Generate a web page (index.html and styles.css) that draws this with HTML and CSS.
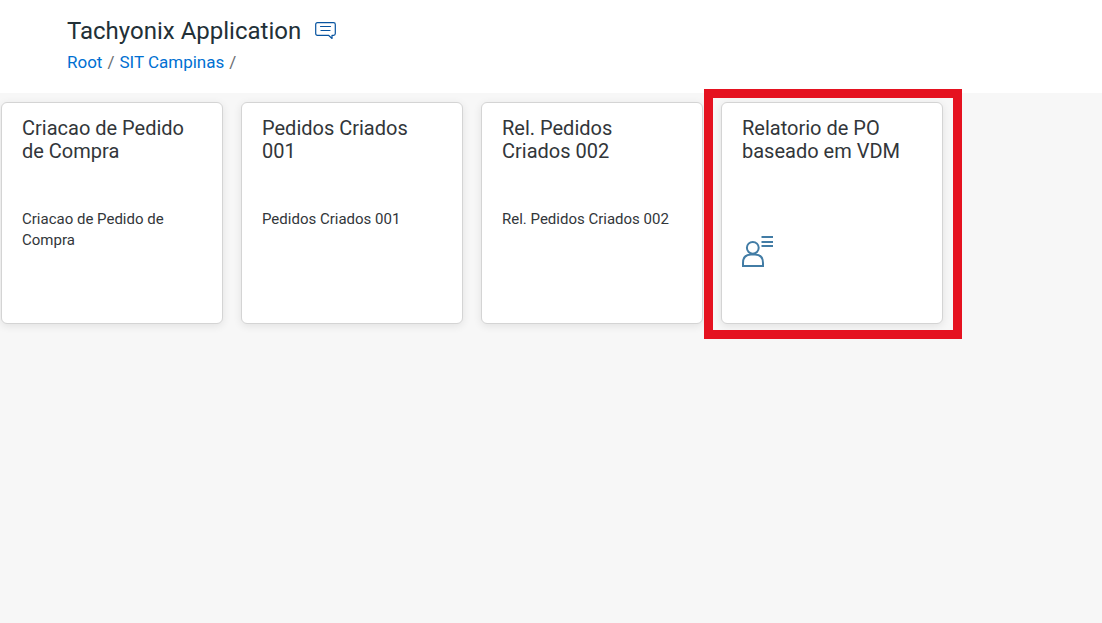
FILE: index.html
```html
<!DOCTYPE html>
<html lang="pt">
<head>
<meta charset="utf-8">
<title>Tachyonix Application</title>
<link rel="stylesheet" href="styles.css">
</head>
<body>
<header class="header">
  <div class="title-row">
    <h1 class="title">Tachyonix Application</h1>
    <button class="comment-button" type="button" aria-label="Comments">
      <svg width="21" height="18" viewBox="0 0 21 18" fill="none" stroke="currentColor" stroke-width="1.2" stroke-linejoin="round" stroke-linecap="round" aria-hidden="true">
        <path d="M2.500 .7H18.500Q20.300 .7 20.300 2.500V11.500Q20.300 13.300 18.500 13.300H17V16.500L13.500 13.300H2.500Q.7 13.300 .7 11.500V2.500Q.7 .7 2.500 .7Z"/>
        <path d="M5.500 4.500H15.500M6 8.500H15"/>
      </svg>
    </button>
  </div>
  <nav class="breadcrumb" aria-label="Breadcrumb">
    <a class="crumb" href="#">Root</a><span class="separator">/</span><a class="crumb" href="#">SIT Campinas</a><span class="separator">/</span>
  </nav>
</header>
<main class="tiles">
  <a class="tile" href="#">
    <h2 class="tile-title">Criacao de Pedido de Compra</h2>
    <p class="tile-text">Criacao de Pedido de Compra</p>
  </a>
  <a class="tile" href="#">
    <h2 class="tile-title">Pedidos Criados 001</h2>
    <p class="tile-text">Pedidos Criados 001</p>
  </a>
  <a class="tile" href="#">
    <h2 class="tile-title">Rel. Pedidos Criados 002</h2>
    <p class="tile-text">Rel. Pedidos Criados 002</p>
  </a>
  <a class="tile tile-marked" href="#">
    <h2 class="tile-title">Relatorio de PO baseado em VDM</h2>
    <svg class="tile-icon" width="32" height="32" viewBox="0 0 32 32" fill="none" stroke="currentColor" stroke-width="2" aria-hidden="true">
      <circle cx="10.800" cy="11.800" r="5.900"/>
      <path d="M1 30V27Q1 18.500 9 18.500H13Q21 18.500 21 27V30Z"/>
      <path d="M19.500 1H31M19.500 6H31M19.500 10H31"/>
    </svg>
  </a>
</main>
</body>
</html>
```
FILE: styles.css
```css
* {
  box-sizing: border-box;
}

body {
  min-height: 100vh;
  margin: 0;
  background: #f7f7f7;
  color: #32363a;
  font-family: Roboto, "Liberation Sans", sans-serif;
}

.header {
  padding: 16px 67px 19px;
  background: #fff;
}

.title-row {
  display: flex;
  align-items: center;
  gap: 14px;
}

.title {
  margin: 0;
  color: #223037;
  font-size: 24px;
  font-weight: 400;
  line-height: 30px;
}

.comment-button {
  display: flex;
  padding: 0;
  border: 0;
  background: none;
  color: #0854a0;
}

.breadcrumb {
  display: flex;
  gap: 5px;
  padding-top: 4px;
  font-size: 17px;
  line-height: 24px;
}

.crumb {
  color: #0070d2;
  text-decoration: none;
}

.separator {
  color: #6a6d70;
}

.tiles {
  display: flex;
  flex-wrap: wrap;
  gap: 18px;
  padding: 9px 1px 18px;
}

.tile {
  display: flex;
  flex-direction: column;
  width: 222px;
  min-height: 222px;
  padding: 14px 20px;
  border: 1px solid #d4d4d4;
  border-radius: 6px;
  background: #fff;
  box-shadow: 0 2px 8px rgba(0, 0, 0, 0.09);
  color: inherit;
  text-decoration: none;
}

.tile-title {
  min-height: 92px;
  margin: 0;
  font-size: 20px;
  font-weight: 400;
  line-height: 23px;
}

.tile-text {
  margin: 0;
  font-size: 15px;
  line-height: 21px;
}

.tile-icon {
  margin-top: 27px;
  color: #427ca5;
}

.tile-marked {
  position: relative;
}

.tile-marked::after {
  position: absolute;
  inset: -14px -20px -16px -18px;
  border: 9px solid #e51220;
  content: "";
}
```
